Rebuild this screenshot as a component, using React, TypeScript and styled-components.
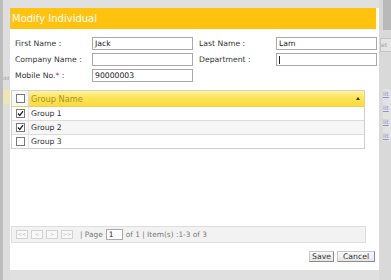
import styled, { createGlobalStyle } from 'styled-components';

const GlobalStyle = createGlobalStyle`
  html, body {
    margin: 0;
    padding: 0;
    background: #d6d6d6;
  }
  body {
    font-family: 'DejaVu Sans', Verdana, sans-serif;
  }
`;

const Page = styled.div`
  width: 391px;
  height: 280px;
  display: flex;
  overflow: hidden;
  background: #d6d6d6;
`;

const LeftStrip = styled.div`
  width: 7px;
  border-left: 3px solid #bcbcbc;
  background: #dedede;
  display: flex;
  flex-direction: column;
  font-size: 5px;
  color: #9a9a9a;
  overflow: hidden;
`;

const StripText = styled.span<{ $top: number }>`
  margin-top: ${(p) => p.$top}px;
  line-height: 10px;
  white-space: nowrap;
`;

const StripBlock = styled.div<{ $top: number; $h: number; $color: string }>`
  margin-top: ${(p) => p.$top}px;
  height: ${(p) => p.$h}px;
  background: ${(p) => p.$color};
`;

const DialogCol = styled.div`
  width: 369px;
  display: flex;
  flex-direction: column;
  background: #e0e0e0;
  padding-top: 8px;
`;

const Window = styled.div`
  height: 262px;
  background: #fff;
  display: flex;
  flex-direction: column;
`;

const TitleBar = styled.div`
  height: 21px;
  margin-right: 3px;
  background: #ffc20e;
  color: #fff;
  font-size: 10px;
  line-height: 21px;
  padding-left: 2px;
`;

const Form = styled.div`
  display: grid;
  grid-template-columns: 77px 101px 83px 101px;
  row-gap: 3px;
  padding: 8px 0 0 5px;
  font-size: 7.7px;
  color: #333;
  align-items: center;
`;

const Label = styled.span<{ $left?: number }>`
  padding-left: ${(p) => p.$left || 0}px;
`;

const Star = styled.span`
  color: #e02020;
`;

const Input = styled.div`
  height: 13px;
  box-sizing: border-box;
  border: 1px solid #a9a9a9;
  background: #fff;
  font-size: 7.7px;
  line-height: 11px;
  padding-left: 2px;
  color: #222;
`;

const Caret = styled.span`
  display: inline-block;
  width: 1px;
  height: 8px;
  background: #222;
  vertical-align: middle;
`;

const Grid = styled.div`
  margin: 8px 0 0 1px;
  width: 354px;
  box-sizing: border-box;
  border: 1px solid #d0d0d0;
  font-size: 7.7px;
`;

const HeadRow = styled.div`
  display: flex;
  height: 15px;
  align-items: stretch;
  border-bottom: 1px solid #e8d060;
`;

const Row = styled.div<{ $alt?: boolean }>`
  display: flex;
  height: 13px;
  align-items: stretch;
  border-bottom: 1px solid #dcdcdc;
  background: ${(p) => (p.$alt ? '#f6f6f6' : '#fff')};
  &:last-child {
    border-bottom: none;
  }
`;

const CheckCell = styled.div<{ $head?: boolean }>`
  width: 16px;
  display: flex;
  align-items: center;
  justify-content: center;
  border-right: 1px solid ${(p) => (p.$head ? '#dcdcdc' : '#e4e4e4')};
  background: ${(p) => (p.$head ? '#f8f8f8' : 'transparent')};
`;

const NameCell = styled.div<{ $head?: boolean }>`
  flex: 1;
  display: flex;
  align-items: center;
  padding-left: 2px;
  color: ${(p) => (p.$head ? '#a8952a' : '#333')};
  background: ${(p) =>
    p.$head ? 'linear-gradient(#fff39a 0%, #fde35a 45%, #fcdc3c 100%)' : 'transparent'};
  font-size: ${(p) => (p.$head ? '8.2px' : '7.7px')};
`;

const SortArrow = styled.span`
  margin-left: auto;
  margin-right: 4px;
  width: 0;
  height: 0;
  border-left: 2px solid transparent;
  border-right: 2px solid transparent;
  border-bottom: 3px solid #333;
`;

const Box = styled.span`
  width: 9px;
  height: 9px;
  box-sizing: border-box;
  border: 1px solid #7a7a7a;
  background: #fff;
  display: flex;
  align-items: center;
  justify-content: center;
`;

const Pager = styled.div`
  margin: 77px 0 0 1px;
  width: 355px;
  height: 17px;
  box-sizing: border-box;
  border: 1px solid #dedede;
  background: #f2f2f2;
  display: flex;
  align-items: center;
  padding-left: 4px;
  gap: 3px;
  font-size: 7.4px;
  color: #7a7a7a;
`;

const PageBtn = styled.span`
  width: 12px;
  height: 9px;
  box-sizing: border-box;
  border: 1px solid #d2d2d2;
  background: #f8f8f8;
  color: #c0c0c0;
  font-size: 5px;
  line-height: 7px;
  text-align: center;
`;

const PagerText = styled.span<{ $gap?: number }>`
  margin-left: ${(p) => p.$gap || 0}px;
  white-space: nowrap;
`;

const PageInput = styled.span`
  width: 17px;
  height: 11px;
  box-sizing: border-box;
  border: 1px solid #a9a9a9;
  background: #fff;
  color: #222;
  line-height: 9px;
  padding-left: 2px;
`;

const Actions = styled.div`
  margin-top: 8px;
  display: flex;
  justify-content: flex-end;
  gap: 3px;
  padding-right: 4px;
`;

const Button = styled.span<{ $w: number }>`
  width: ${(p) => p.$w}px;
  height: 11px;
  box-sizing: border-box;
  border: 1px solid #8a8a8a;
  border-top-color: #c8c8c8;
  border-left-color: #c8c8c8;
  background: linear-gradient(#fafafa, #e6e6e6);
  font-size: 7.7px;
  line-height: 9px;
  text-align: center;
  color: #333;
`;

const RightStrip = styled.div`
  width: 12px;
  background: #d9d9d9;
  display: flex;
  flex-direction: column;
  align-items: flex-end;
  font-size: 6px;
  overflow: hidden;
`;

const ScrollThumb = styled.div`
  width: 8px;
  height: 30px;
  background: #b9b9b9;
`;

const GhostBtn = styled.div`
  width: 10px;
  height: 12px;
  margin-top: 8px;
  border: 1px solid #c4c4c4;
  border-right: none;
  background: #e4e4e4;
  color: #a0a0a0;
  line-height: 11px;
  white-space: nowrap;
  overflow: hidden;
`;

const GhostLinks = styled.div`
  margin-top: 37px;
  width: 8px;
  display: flex;
  flex-direction: column;
  gap: 4px;
  background: #e2e2e2;
`;

const GhostLink = styled.span`
  color: #8f8fd0;
  text-decoration: underline;
  line-height: 10px;
  white-space: nowrap;
`;

function Check({ on }: { on?: boolean }) {
  return (
    <Box>
      {on && (
        <svg width="7" height="7" viewBox="0 0 7 7">
          <path d="M1 3.5 L2.8 5.4 L6 1.2" fill="none" stroke="#222" strokeWidth="1.3" />
        </svg>
      )}
    </Box>
  );
}

const groups = [
  { name: 'Group 1', checked: true },
  { name: 'Group 2', checked: true },
  { name: 'Group 3', checked: false },
];

export default function App() {
  return (
    <>
      <GlobalStyle />
      <Page>
        <LeftStrip>
          <StripText $top={73}>dd</StripText>
          <StripBlock $top={7} $h={14} $color="#ece6b0" />
        </LeftStrip>
        <DialogCol>
          <Window>
            <TitleBar>Modify Individual</TitleBar>
            <Form>
              <Label>First Name :</Label>
              <Input>Jack</Input>
              <Label $left={6}>Last Name :</Label>
              <Input>Lam</Input>
              <Label>Company Name :</Label>
              <Input />
              <Label $left={6}>Department :</Label>
              <Input>
                <Caret />
              </Input>
              <Label>
                Mobile No.<Star>*</Star> :
              </Label>
              <Input>90000003</Input>
            </Form>
            <Grid>
              <HeadRow>
                <CheckCell $head>
                  <Check />
                </CheckCell>
                <NameCell $head>
                  Group Name
                  <SortArrow />
                </NameCell>
              </HeadRow>
              {groups.map((g, i) => (
                <Row key={g.name} $alt={i === 1}>
                  <CheckCell>
                    <Check on={g.checked} />
                  </CheckCell>
                  <NameCell>{g.name}</NameCell>
                </Row>
              ))}
            </Grid>
            <Pager>
              <PageBtn>&lt;&lt;</PageBtn>
              <PageBtn>&lt;</PageBtn>
              <PageBtn>&gt;</PageBtn>
              <PageBtn>&gt;&gt;</PageBtn>
              <PagerText $gap={4}>| Page</PagerText>
              <PageInput>1</PageInput>
              <PagerText>of 1 | Item(s) :1-3 of 3</PagerText>
            </Pager>
            <Actions>
              <Button $w={25}>Save</Button>
              <Button $w={38}>Cancel</Button>
            </Actions>
          </Window>
        </DialogCol>
        <RightStrip>
          <ScrollThumb />
          <GhostBtn>et</GhostBtn>
          <GhostLinks>
            <GhostLink>lit</GhostLink>
            <GhostLink>lit</GhostLink>
            <GhostLink>lit</GhostLink>
            <GhostLink>lit</GhostLink>
          </GhostLinks>
        </RightStrip>
      </Page>
    </>
  );
}
